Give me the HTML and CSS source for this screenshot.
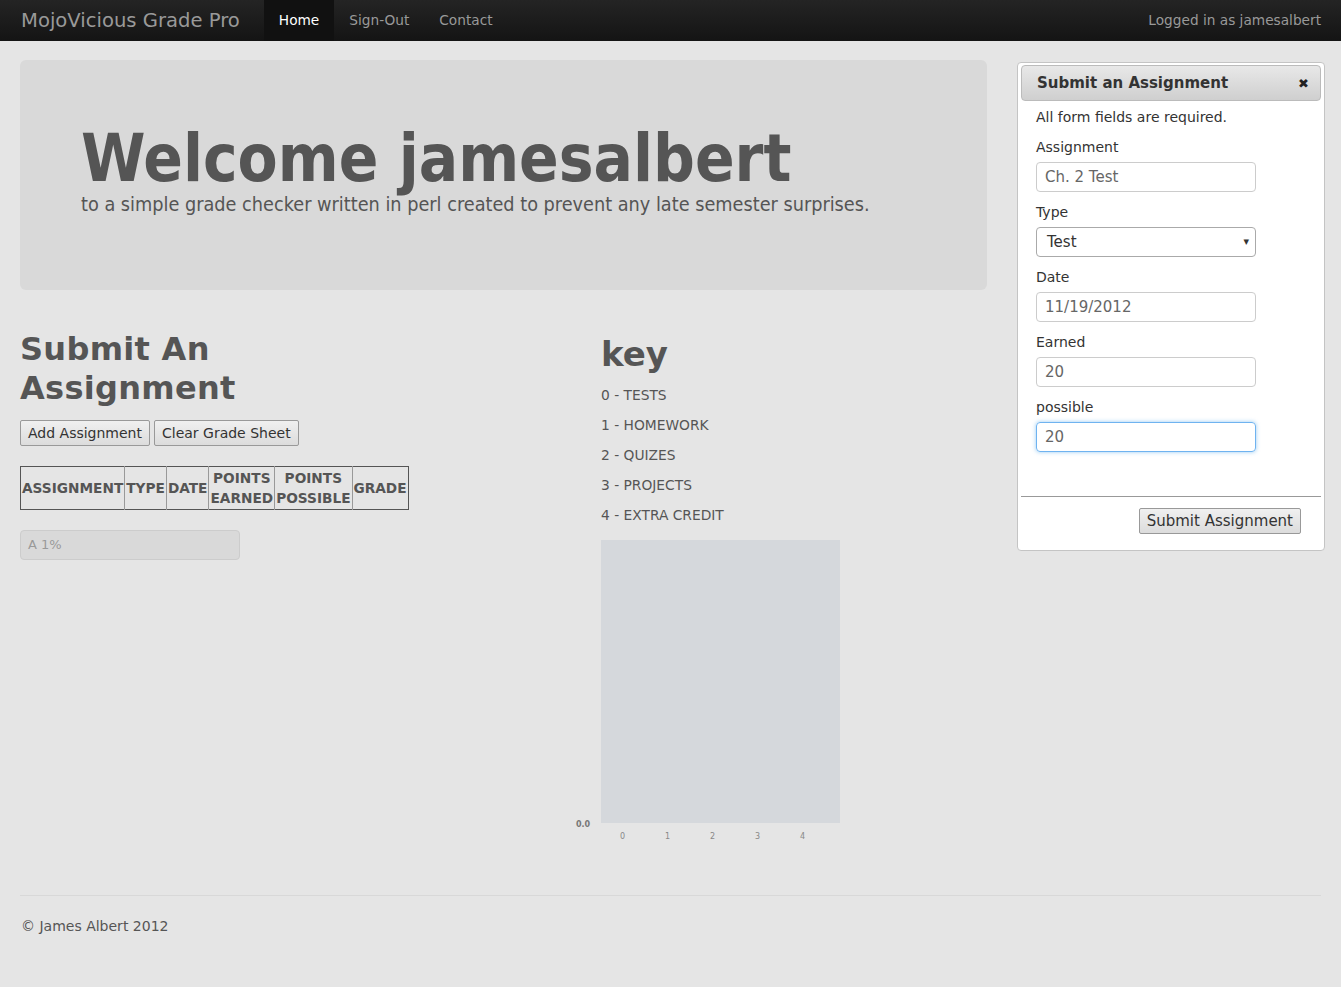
FILE: index.html
```html
<!DOCTYPE html>
<html>
<head>
<meta charset="utf-8">
<title>MojoVicious Grade Pro</title>
<link rel="stylesheet" href="styles.css">
</head>
<body>
<div class="navbar">
  <div class="brand">MojoVicious Grade Pro</div>
  <ul class="nav">
    <li class="active">Home</li>
    <li>Sign-Out</li>
    <li>Contact</li>
  </ul>
  <div class="user">Logged in as jamesalbert</div>
</div>
<div class="page">
  <div class="main">
    <div class="hero">
      <h1>Welcome jamesalbert</h1>
      <p>to a simple grade checker written in perl created to prevent any late semester surprises.</p>
    </div>
    <div class="cols">
      <div class="left">
        <h2>Submit An Assignment</h2>
        <div class="btns">
          <button class="btn">Add Assignment</button>
          <button class="btn">Clear Grade Sheet</button>
        </div>
        <table class="grades">
          <tr>
            <th>ASSIGNMENT</th>
            <th>TYPE</th>
            <th>DATE</th>
            <th>POINTS<br>EARNED</th>
            <th>POINTS<br>POSSIBLE</th>
            <th>GRADE</th>
          </tr>
        </table>
        <div class="progress">A 1%</div>
      </div>
      <div class="right">
        <h2 class="keyh">key</h2>
        <ul class="key">
          <li>0 - TESTS</li>
          <li>1 - HOMEWORK</li>
          <li>2 - QUIZES</li>
          <li>3 - PROJECTS</li>
          <li>4 - EXTRA CREDIT</li>
        </ul>
        <div class="chart">
          <div class="yaxis">0.0</div>
          <div class="plotwrap">
            <div class="plot"></div>
            <div class="xaxis"><span>0</span><span>1</span><span>2</span><span>3</span><span>4</span></div>
          </div>
        </div>
      </div>
    </div>
  </div>
  <div class="side">
    <div class="panel">
      <div class="panel-head"><span>Submit an Assignment</span><span class="close">&#x2716;</span></div>
      <div class="panel-body">
        <p class="req">All form fields are required.</p>
        <label>Assignment</label>
        <div class="input">Ch. 2 Test</div>
        <label>Type</label>
        <div class="select"><span>Test</span><span class="caret">&#9662;</span></div>
        <label>Date</label>
        <div class="input">11/19/2012</div>
        <label>Earned</label>
        <div class="input">20</div>
        <label>possible</label>
        <div class="input focus">20</div>
      </div>
      <div class="panel-foot">
        <button class="btn submit">Submit Assignment</button>
      </div>
    </div>
  </div>
</div>
<div class="footer">
  <p>&copy; James Albert 2012</p>
</div>
</body>
</html>
```
FILE: styles.css
```css
* { box-sizing: border-box; }
body {
  margin: 0;
  background: #e5e5e5;
  font-family: "DejaVu Sans", Verdana, sans-serif;
  font-size: 14px;
  color: #555;
}
.navbar {
  height: 41px;
  background: linear-gradient(#242424, #141414);
  display: flex;
  align-items: stretch;
  padding: 0 20px 0 21px;
}
.brand {
  font-size: 19.6px;
  color: #999;
  line-height: 41px;
  margin-right: 24px;
}
.nav {
  list-style: none;
  margin: 0;
  padding: 0;
  display: flex;
}
.nav li {
  color: #999;
  line-height: 41px;
  padding: 0 15px;
  font-size: 13.7px;
}
.nav li.active {
  color: #fff;
  background: #111;
}
.user {
  margin-left: auto;
  color: #999;
  line-height: 41px;
  font-size: 13.7px;
}
.page {
  display: flex;
  padding: 19px 16px 0 20px;
  gap: 30px;
}
.main { width: 967px; }
.hero {
  background: #d9d9d9;
  border-radius: 6px;
  height: 230px;
  padding: 65px 60px 0 61px;
}
.hero h1 {
  margin: 0;
  font-family: "DejaVu Sans Condensed", "DejaVu Sans", sans-serif;
  font-weight: bold;
  font-size: 65px;
  line-height: 67px;
  color: #555;
}
.hero p {
  margin: 2px 0 0;
  font-family: "DejaVu Sans Condensed", "DejaVu Sans", sans-serif;
  font-size: 19.7px;
  line-height: 22px;
}
.cols {
  display: grid;
  grid-template-columns: 581px 1fr;
  margin-top: 40px;
}
.left h2 {
  width: 300px;
  margin: 0 0 12px;
  font-size: 32px;
  line-height: 39px;
  font-weight: bold;
  color: #555;
  letter-spacing: 0.3px;
}
.btns { display: flex; gap: 4px; }
.btn {
  font-family: "DejaVu Sans", sans-serif;
  font-size: 14px;
  color: #333;
  background: linear-gradient(#f0f0f0, #dcdcdc);
  border: 1px solid #999;
  border-radius: 2px;
  height: 26px;
  padding: 0 7px;
}
.grades {
  margin-top: 20px;
  border-collapse: collapse;
  border: 1px solid #555;
}
.grades th {
  border-left: 1px solid #999;
  font-size: 13.7px;
  line-height: 20px;
  padding: 1px;
  height: 42px;
  color: #555;
}
.grades th:first-child { border-left: none; }
.progress {
  margin-top: 20px;
  width: 220px;
  height: 30px;
  background: #d9d9d9;
  border: 1px solid #ccc;
  border-radius: 4px;
  color: #999;
  font-size: 13px;
  line-height: 28px;
  padding-left: 7px;
}
.keyh {
  margin: 4px 0 0;
  font-size: 34px;
  line-height: 40px;
  font-weight: bold;
  color: #555;
}
.key {
  list-style: none;
  margin: 6px 0 0;
  padding: 0;
}
.key li {
  font-size: 13.8px;
  line-height: 30px;
  color: #555;
}
.chart {
  display: flex;
  margin-left: -25px;
  margin-top: 10px;
}
.yaxis {
  width: 25px;
  font-size: 8px;
  font-weight: bold;
  color: #777;
  padding-top: 280px;
}
.plot {
  width: 239px;
  height: 283px;
  background: #d5d8dc;
}
.xaxis {
  display: flex;
  padding-left: 19px;
  font-size: 8px;
  color: #888;
  margin-top: 9px;
}
.xaxis span { width: 45px; }
.side { padding-top: 2px; }
.panel {
  width: 308px;
  background: #fff;
  border: 1px solid #c4c4c4;
  border-radius: 4px;
  padding: 2px 3px 16px;
}
.panel-head {
  height: 36px;
  background: linear-gradient(#e8e8e8, #cfcfcf);
  border: 1px solid #bbb;
  border-radius: 4px;
  display: flex;
  justify-content: space-between;
  align-items: center;
  padding: 0 11px 0 15px;
  font-weight: bold;
  font-size: 15px;
  color: #333;
}
.close { font-size: 13px; color: #222; }
.panel-body {
  padding: 6px 15px 34px;
  color: #333;
}
.req { margin: 0 0 10px; font-size: 14px; line-height: 20px; }
.panel-body label {
  display: block;
  font-size: 14px;
  line-height: 20px;
  margin-bottom: 5px;
}
.input, .select {
  width: 220px;
  height: 30px;
  border: 1px solid #ccc;
  border-radius: 4px;
  font-size: 15px;
  line-height: 28px;
  padding-left: 8px;
  color: #666;
  margin-bottom: 10px;
}
.select {
  display: flex;
  justify-content: space-between;
  border-color: #aaa;
  color: #333;
  padding: 0 6px 0 10px;
}
.caret { font-size: 11px; }
.input.focus {
  border-color: #6fb3f0;
  box-shadow: 0 0 4px rgba(82,168,236,0.6);
}
.panel-foot {
  border-top: 1px solid #999;
  padding-top: 11px;
  text-align: right;
  padding-right: 20px;
}
.submit { padding: 0 7px; height: 26px; font-size: 15px; }
.footer {
  margin: 54px 20px 0;
  border-top: 1px solid #d8d8d8;
  padding-top: 22px;
}
.footer p { margin: 0; font-size: 14px; padding-left: 1px; }
```
